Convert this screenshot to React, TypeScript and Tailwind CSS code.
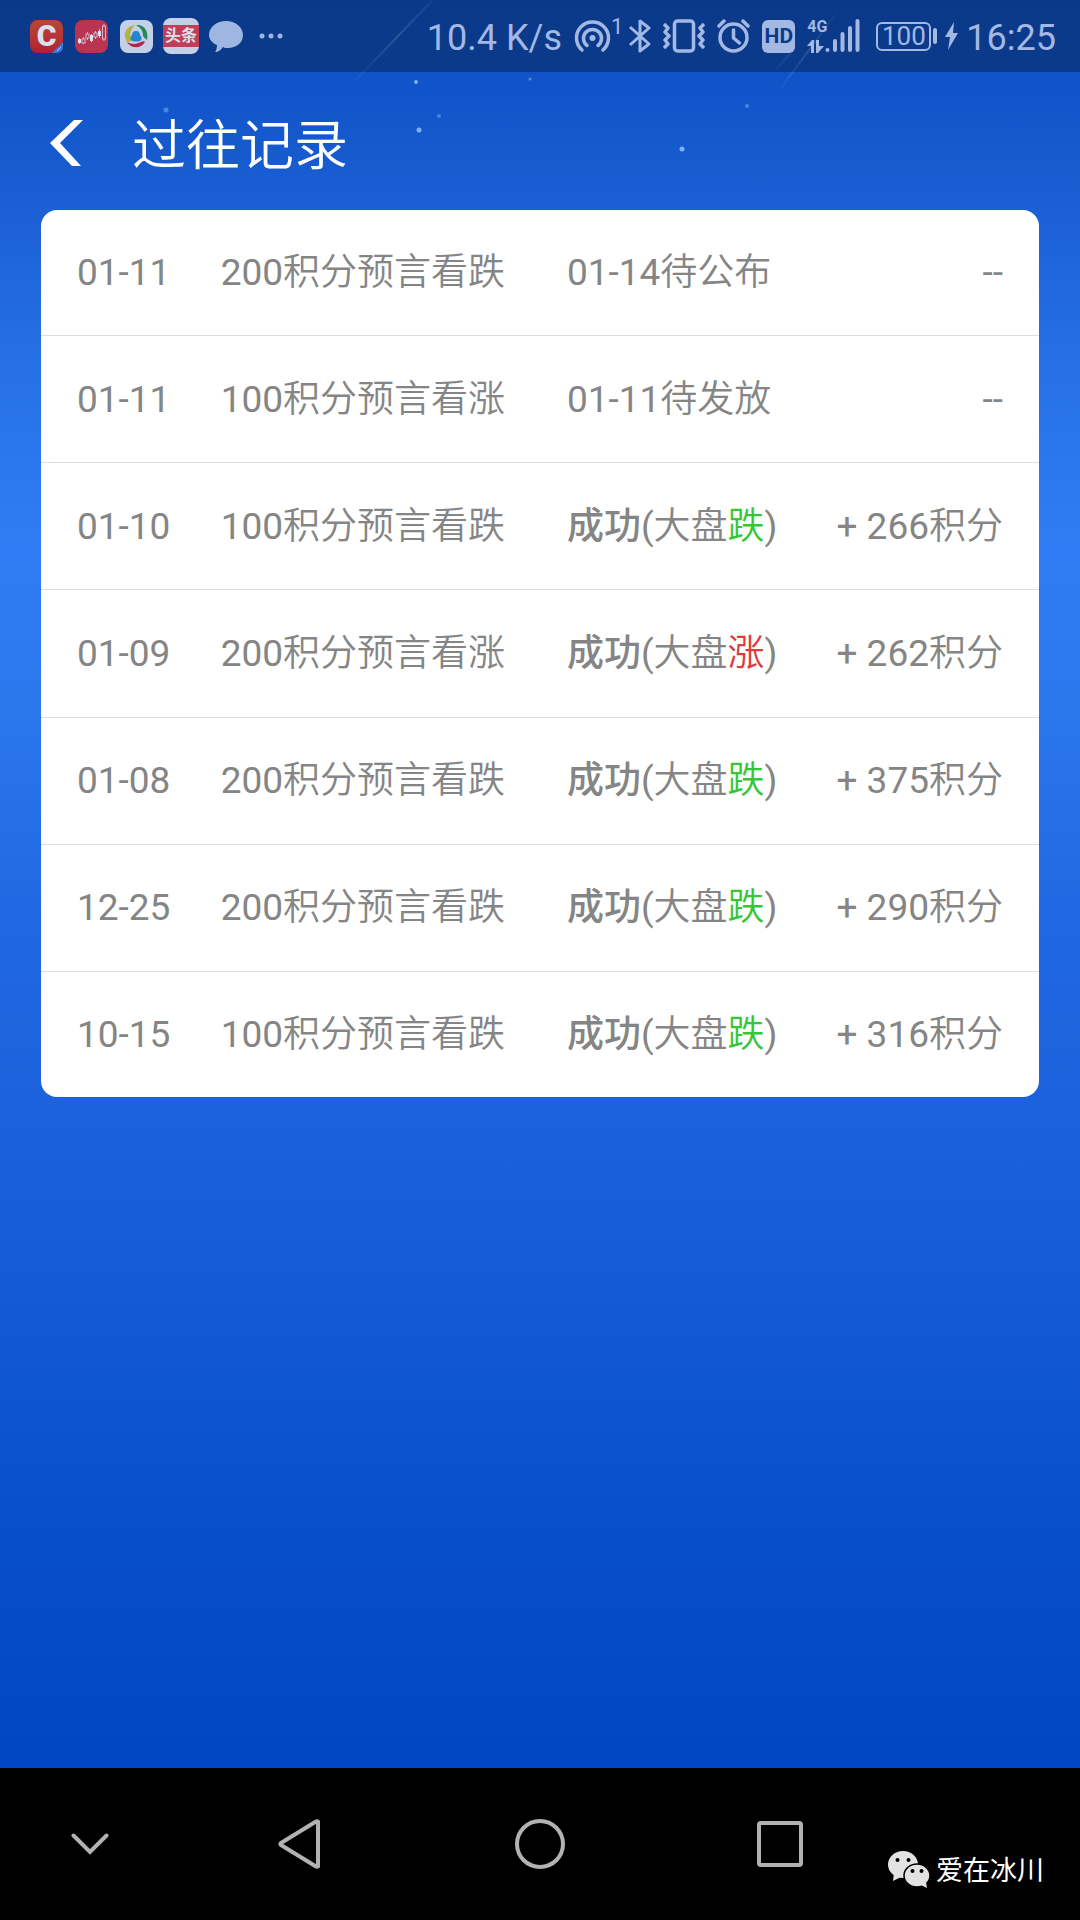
import type { ReactNode } from "react";

type Trend = "跌" | "涨";

type HistoryRecord = {
  date: string;
  points: number;
  guess: Trend;
  pending?: { date: string; label: string };
  result?: Trend;
  reward?: number;
};

const records: HistoryRecord[] = [
  { date: "01-11", points: 200, guess: "跌", pending: { date: "01-14", label: "待公布" } },
  { date: "01-11", points: 100, guess: "涨", pending: { date: "01-11", label: "待发放" } },
  { date: "01-10", points: 100, guess: "跌", result: "跌", reward: 266 },
  { date: "01-09", points: 200, guess: "涨", result: "涨", reward: 262 },
  { date: "01-08", points: 200, guess: "跌", result: "跌", reward: 375 },
  { date: "12-25", points: 200, guess: "跌", result: "跌", reward: 290 },
  { date: "10-15", points: 100, guess: "跌", result: "跌", reward: 316 },
];

// Chinese text is set lighter than the digits beside it
const Cn = ({ children }: { children: ReactNode }) => (
  <span className="font-[350]">{children}</span>
);

const AppIcons = () => (
  <div className="flex items-center gap-3 opacity-85">
    <div className="relative flex size-[33px] items-center justify-center rounded-lg bg-linear-to-b from-[#d8482a] to-[#d01824] text-[30px] leading-none font-black text-white">
      C
      <svg className="absolute right-0 bottom-0" width="11" height="11" viewBox="0 0 11 11">
        <path d="M11 0v4q0 7-7 7H0z" fill="#3c86f4" />
        <path d="M5 9l4-4" stroke="#cfe0ff" strokeWidth="1" />
      </svg>
    </div>
    <svg width="33" height="33" viewBox="0 0 33 33" fill="none">
      <rect width="33" height="33" rx="8" fill="#d83448" />
      <g stroke="#f3d3d8" strokeWidth="1">
        <path d="M4.500 18v6M8.500 17v7M12.500 12v8M16.500 14v8M20.500 11v8M24.500 9v9M29 4v17" />
        <rect x="7" y="19" width="3" height="4" fill="#d83448" />
        <rect x="11" y="14" width="3" height="4" fill="#d83448" />
        <rect x="19" y="13" width="3" height="4" fill="#d83448" />
        <rect x="27.500" y="6" width="3" height="13" fill="#d83448" />
      </g>
      <g fill="#fff">
        <rect x="3" y="19" width="3" height="4" />
        <rect x="15" y="15" width="3" height="6" />
        <rect x="23" y="11" width="3" height="5" />
      </g>
    </svg>
    <svg width="33" height="33" viewBox="0 0 33 33" fill="none">
      <rect width="33" height="33" rx="8" fill="#e4ebf8" />
      <path d="M15 5C6 6 2 14 7 22c2 0 4-1 5-2-3-5-2-10 3-15z" fill="#d6c935" />
      <path d="M16 5c8-1 13 6 11 15-1-1-3-2-4-4 0-5-2-8-7-11z" fill="#27974f" />
      <path d="M7 22c4 7 14 7 18 0-1-1-2-1-4 0-4 2-8 3-14 0z" fill="#cf2338" />
      <path d="M16 11c3 0 4 2 4 4 2 2 2 4 1 5-1 2-9 2-10 0-1-1-1-3 1-5 0-2 1-4 4-4z" fill="#2c93dd" />
    </svg>
    <div className="-mx-[2px] flex h-9 w-9 flex-col justify-center rounded-lg bg-[#e4ebf8]">
      <span className="bg-[#e0404f] text-center text-[16px] leading-[22px] font-bold text-white">
        头条
      </span>
    </div>
    <svg width="34" height="33" viewBox="0 0 34 33">
      <path
        d="M17 1c9 0 17 6 17 14s-7 13-15 13c-2 0-4 0-5-1-2 3-5 5-8 5 1-1 2-4 2-7-5-2-8-6-8-10C0 7 8 1 17 1z"
        fill="#b9ccf0"
      />
    </svg>
    <svg className="ml-1" width="24" height="6" viewBox="0 0 24 6" fill="#b9ccf0">
      <circle cx="3" cy="3" r="2.500" />
      <circle cx="12" cy="3" r="2.500" />
      <circle cx="21" cy="3" r="2.500" />
    </svg>
  </div>
);

const SystemIcons = () => (
  <div className="flex items-center">
    <span className="mr-3 pt-1 text-[36px] leading-none">10.4 K/s</span>
    <svg width="37" height="33" viewBox="0 0 37 33" fill="none" stroke="currentColor" strokeWidth="3.500">
      <path d="M8 30A16 16 0 1 1 29 30" strokeLinecap="round" />
      <path d="M13 25.500A9 9 0 1 1 24 25.500" strokeLinecap="round" />
      <circle cx="18.500" cy="18" r="3" fill="currentColor" stroke="none" />
    </svg>
    <span className="mr-[6px] self-start text-[22px] leading-none">1</span>
    <svg width="22" height="34" viewBox="0 0 22 34" fill="none" stroke="currentColor" strokeWidth="3">
      <path d="M1 8l19 17-9 7V2l9 7L1 26" strokeLinejoin="round" />
    </svg>
    <svg className="ml-3" width="42" height="34" viewBox="0 0 42 34" fill="none" stroke="currentColor">
      <rect x="11.500" y="2" width="19" height="30" rx="3" strokeWidth="3.500" />
      <path
        d="M1 5l4 4-3 4 4 4-4 4 3 4-4 4M41 5l-4 4 3 4-4 4 4 4-3 4 4 4"
        strokeWidth="3.500"
        strokeLinejoin="round"
      />
    </svg>
    <svg className="ml-3" width="33" height="34" viewBox="0 0 33 34" fill="none" stroke="currentColor" strokeWidth="3.500">
      <circle cx="16.500" cy="18.500" r="13.500" />
      <path d="M16.500 11v8l6 5" strokeLinecap="round" strokeLinejoin="round" />
      <path d="M2 7l5-5M31 7l-5-5" strokeLinecap="round" />
    </svg>
    <span className="ml-3 flex size-[33px] items-center justify-center rounded-md bg-[#a3b8e2] text-[21px] leading-none font-bold text-[#0b3a8a]">
      HD
    </span>
    <div className="ml-3 flex h-[34px] items-end">
      <div className="flex w-[18px] flex-col justify-between self-stretch">
        <span className="text-[16px] leading-[15px] font-bold">4G</span>
        <svg width="17" height="13" viewBox="0 0 17 13" fill="currentColor">
          <path d="M0 6l5-6h2v13H4V6zM9 0h3v6h5l-6 7H9z" />
        </svg>
      </div>
      <svg width="35" height="34" viewBox="0 0 35 34" stroke="currentColor" strokeWidth="4" strokeLinecap="round">
        <path d="M2.500 31v0M10 31V22M17.500 31V15M25 31V9M32.500 31V2" />
      </svg>
    </div>
    <div className="ml-4 flex items-center gap-[2px]">
      <span className="flex h-[29px] w-[55px] items-center justify-center rounded-md border-2 border-current text-[26px] leading-none">
        100
      </span>
      <span className="h-4 w-1 rounded-sm bg-current" />
    </div>
    <svg className="ml-2" width="13" height="28" viewBox="0 0 13 28" fill="currentColor">
      <path d="M9 0L0 15h5L3 28l10-17H8z" />
    </svg>
    <span className="ml-2 pt-1 text-[36px] leading-none">16:25</span>
  </div>
);

const StarField = () => (
  <svg className="pointer-events-none absolute top-0 left-0" width="1080" height="210" viewBox="0 0 1080 210">
    <defs>
      <linearGradient id="streak" x1="1" y1="0" x2="0" y2="1">
        <stop offset="0" stopColor="#6aa4f5" stopOpacity="0" />
        <stop offset="0.5" stopColor="#6aa4f5" stopOpacity="0.5" />
        <stop offset="1" stopColor="#6aa4f5" stopOpacity="0" />
      </linearGradient>
    </defs>
    <g stroke="url(#streak)" strokeWidth="2">
      <path d="M446-14L352 84" />
      <path d="M840 8L778 92" />
      <path d="M800 42L772 74" opacity="0.5" />
    </g>
    <g fill="#7db2fb">
      <circle cx="416" cy="82" r="2" />
      <circle cx="419" cy="130" r="2.500" />
      <circle cx="682" cy="149" r="2.500" />
      <circle cx="166" cy="110" r="2.500" opacity="0.5" />
      <circle cx="439" cy="116" r="2" opacity="0.5" />
      <circle cx="747" cy="106" r="2" opacity="0.5" />
      <circle cx="530" cy="79" r="1.500" opacity="0.6" />
    </g>
  </svg>
);

const RecordTable = () => (
  <div className="mx-[41px] overflow-hidden rounded-2xl bg-white">
    <table className="h-[887px] w-full table-fixed text-[37px] leading-none whitespace-nowrap text-[#858585]">
      <colgroup>
        <col className="w-[18%]" />
        <col className="w-[34.700%]" />
        <col className="w-[24%]" />
        <col />
      </colgroup>
      <tbody className="divide-y divide-[#dedede]">
        {records.map(({ date, points, guess, pending, result, reward }) => (
          <tr key={`${date}-${points}`}>
            <td className="pl-9">{date}</td>
            <td>
              {points}
              <Cn>积分预言看{guess}</Cn>
            </td>
            <td>
              {pending ? (
                <>
                  {pending.date}
                  <Cn>{pending.label}</Cn>
                </>
              ) : (
                <>
                  <span className="font-medium">成功</span>(<Cn>大盘</Cn>
                  <span className={result === "跌" ? "text-[#36c736]" : "text-[#dc3c3c]"}>
                    <Cn>{result}</Cn>
                  </span>
                  )
                </>
              )}
            </td>
            <td className="pr-9 text-right">
              {reward ? (
                <>
                  + {reward}
                  <Cn>积分</Cn>
                </>
              ) : (
                "--"
              )}
            </td>
          </tr>
        ))}
      </tbody>
    </table>
  </div>
);

const NavBar = () => (
  <nav className="relative grid h-[152px] grid-cols-[3fr_4fr_4fr_4fr_3fr] bg-black text-[#b2b2b2]">
    <button className="flex items-center justify-center" aria-label="收起导航栏">
      <svg width="38" height="22" viewBox="0 0 38 22" fill="none" stroke="currentColor" strokeWidth="4">
        <path d="M2.500 2.500L19 19 35.500 2.500" strokeLinecap="round" />
      </svg>
    </button>
    <button className="flex items-center justify-center" aria-label="返回">
      <svg width="44" height="50" viewBox="0 0 44 50" fill="none" stroke="currentColor" strokeWidth="4">
        <path d="M40 2.500V47.500Q39 48 38 47.500L3 26Q2 25 3 24L38 2.500Q39 2 40 2.500z" strokeLinejoin="round" />
      </svg>
    </button>
    <button className="flex items-center justify-center" aria-label="主页">
      <span className="size-[50px] rounded-full border-4 border-current" />
    </button>
    <button className="flex items-center justify-center" aria-label="最近任务">
      <span className="size-[46px] rounded-sm border-4 border-current" />
    </button>
    <div className="absolute right-9 bottom-8 flex items-center gap-[6px]">
      <svg width="42" height="37" viewBox="0 0 42 37" fill="#e2e2e2">
        <ellipse cx="15" cy="13.500" rx="15" ry="13.500" />
        <path d="M6 22l-1 8 8-4z" />
        <ellipse cx="29" cy="24.500" rx="13" ry="11.500" stroke="#000" strokeWidth="1.500" />
        <path d="M33 34l6 3-1-6z" />
        <g fill="#000">
          <circle cx="9.500" cy="9" r="2" />
          <circle cx="20.500" cy="9" r="2" />
          <circle cx="24.500" cy="20" r="2" />
          <circle cx="33.500" cy="20" r="2" />
        </g>
      </svg>
      <span className="pt-1 text-[27px] leading-none text-white">爱在冰川</span>
    </div>
  </nav>
);

const App = () => {
  return (
    <div className="flex min-h-screen flex-col font-['Roboto','Noto_Sans_CJK_SC',sans-serif]">
      <div className="relative flex-1 overflow-hidden bg-[linear-gradient(to_bottom,#0f52c6_0%,#1154c9_5%,#1b60d4_12%,#2570e4_20%,#307cf4_31%,#2b77ec_40%,#2069e2_51%,#1c62dc_62%,#135ad4_73%,#084fcb_86%,#0046c3_100%)]">
        <StarField />
        <div className="relative flex h-[72px] items-center justify-between bg-black/30 pr-6 pl-[30px] text-[#a3b8e2]">
          <AppIcons />
          <SystemIcons />
        </div>
        <header className="relative flex h-[138px] items-center gap-[49px] pt-1 pl-[50px] text-white">
          <button aria-label="返回">
            <svg width="33" height="46" viewBox="0 0 33 46" fill="currentColor">
              <path d="M24 0h9L10 23l21 23h-9L0 23z" />
            </svg>
          </button>
          <h1 className="pt-2 text-[54px] leading-none font-[350]">过往记录</h1>
        </header>
        <RecordTable />
      </div>
      <NavBar />
    </div>
  );
};

export default App;
